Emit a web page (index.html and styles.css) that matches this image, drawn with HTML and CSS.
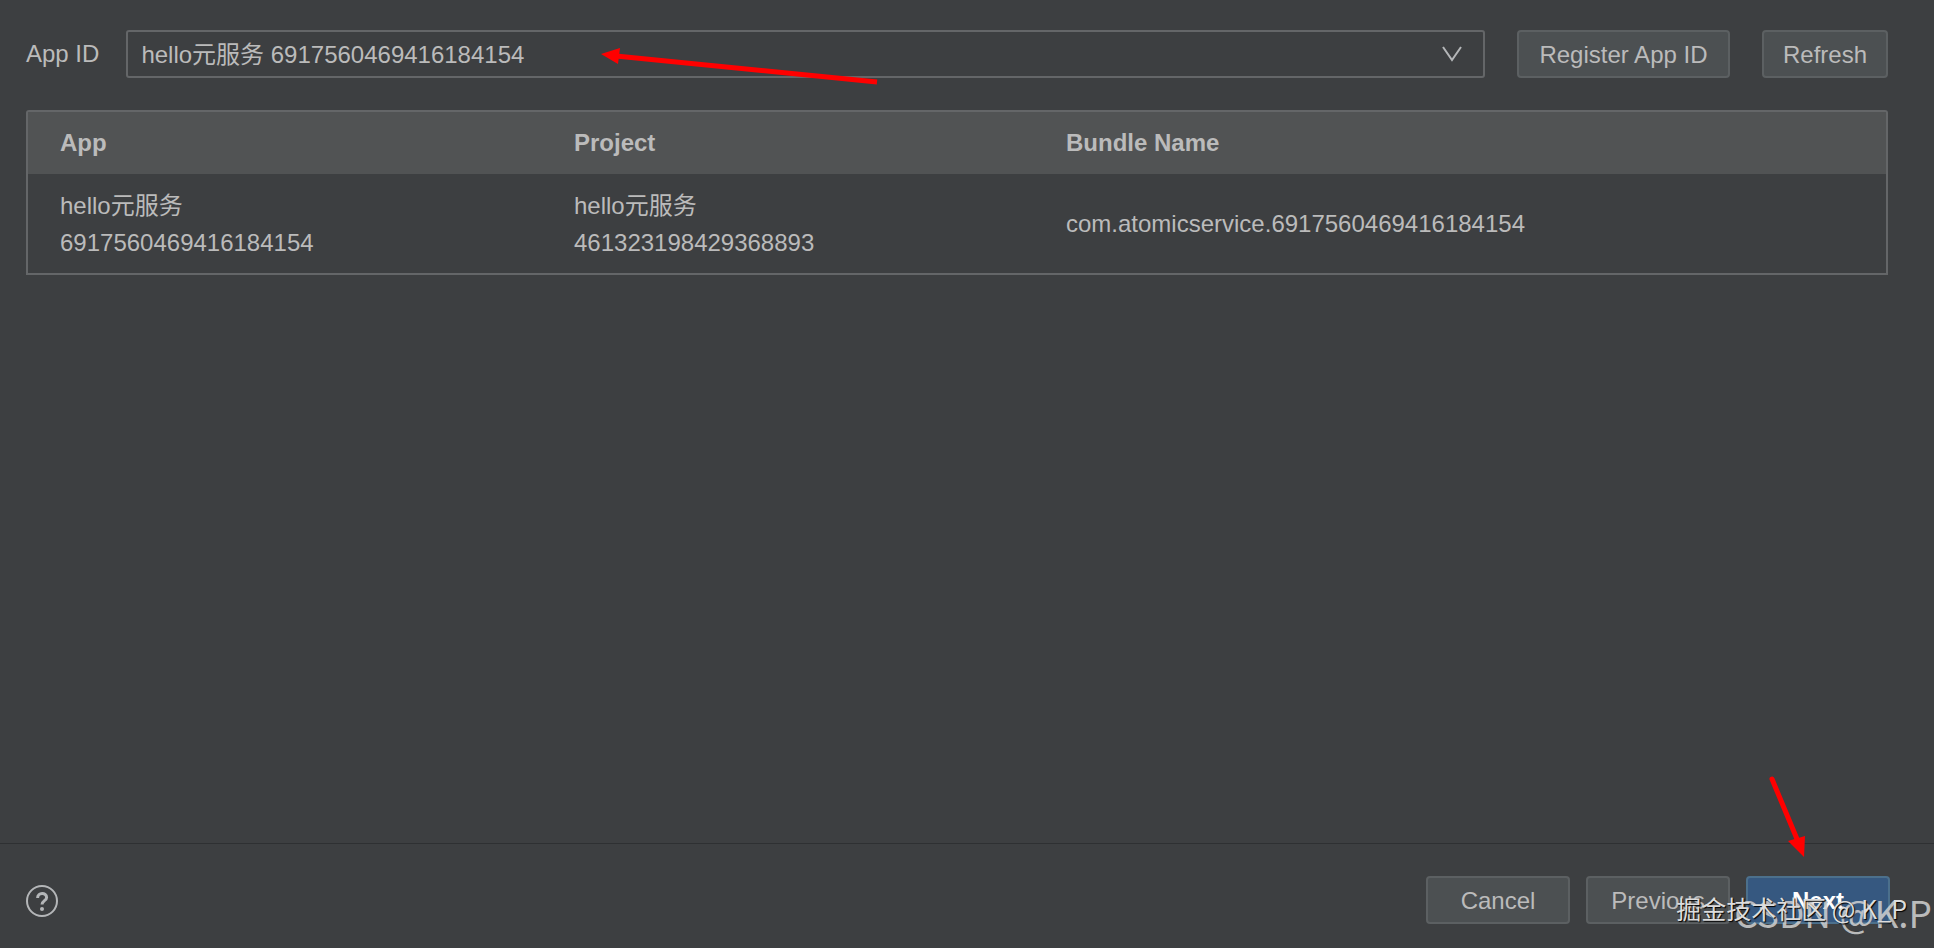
FILE: index.html
```html
<!DOCTYPE html>
<html lang="zh-CN">
<head>
<meta charset="utf-8">
<title>App ID</title>
<link rel="stylesheet" href="styles.css">
</head>
<body>
<main class="content">
  <form class="toolbar">
    <label class="label" for="app-id">App ID</label>
    <div class="combo">
      <select class="combo-field" id="app-id">
        <option>hello元服务 6917560469416184154</option>
      </select>
      <svg class="combo-chevron" width="20" height="16" viewBox="0 0 20 16" aria-hidden="true"><path d="M1 1 L10 14 L19 1"/></svg>
    </div>
    <button class="button register" type="button">Register App ID</button>
    <button class="button" type="button">Refresh</button>
  </form>
  <div class="table-frame">
    <table class="table">
      <thead>
        <tr><th class="col-app">App</th><th class="col-project">Project</th><th>Bundle Name</th></tr>
      </thead>
      <tbody>
        <tr>
          <td>hello元服务<br>6917560469416184154</td>
          <td>hello元服务<br>461323198429368893</td>
          <td>com.atomicservice.6917560469416184154</td>
        </tr>
      </tbody>
    </table>
  </div>
</main>
<footer class="footer">
  <button class="help" type="button" aria-label="Help">
    <svg width="34" height="34" viewBox="0 0 34 34" aria-hidden="true"><circle cx="17" cy="17" r="15"/><path class="hook" d="M12.6 14 C12.6 8.2 21.6 8.2 21.6 13.4 C21.6 16.6 17 16.8 17 20.6"/><circle class="dot" cx="17" cy="25" r="2"/></svg>
  </button>
  <div class="actions">
    <button class="button action" type="button">Cancel</button>
    <button class="button action" type="button">Previous</button>
    <button class="button action primary" type="button">Next</button>
  </div>
</footer>
<svg class="arrow arrow-select" width="280" height="40" viewBox="0 0 280 40" aria-hidden="true"><path class="shaft" d="M15 10 L276 36"/><path d="M0 8 L19 2 L17 18 Z"/></svg>
<svg class="arrow arrow-next" width="40" height="84" viewBox="0 0 40 84" aria-hidden="true"><path class="shaft round" d="M4 4 L29 64"/><path d="M36 82 L20 66 L37 61 Z"/></svg>
<div class="mark mark-csdn">CSDN @K.P</div>
<div class="mark mark-juejin">掘金技术社区 @ K_P</div>
</body>
</html>
```
FILE: styles.css
```css
* { box-sizing: border-box; }
body {
  position: relative;
  display: flex;
  flex-direction: column;
  min-height: 100vh;
  margin: 0;
  background: #3d3f41;
  color: #bbbbbb;
  font: 24px/36px "Liberation Sans", "Noto Sans CJK SC", sans-serif;
}
.content { flex: 1; padding: 30px 46px 0 26px; }
.toolbar { display: flex; align-items: center; gap: 32px; margin: 0 0 32px; }
.label { margin-right: -5px; }
.combo { position: relative; flex: 1; }
.combo-field {
  display: block;
  width: 100%;
  height: 48px;
  padding: 1px 13px 0;
  appearance: none;
  border: 2px solid #646668;
  border-radius: 3px;
  background: #3d3f41;
  color: inherit;
  font: inherit;
}
.combo-chevron {
  position: absolute;
  top: 16px;
  right: 23px;
  fill: none;
  stroke: #b4b6b8;
  stroke-width: 2;
  pointer-events: none;
}
.button {
  height: 48px;
  padding: 1px 19px 0;
  border: 2px solid #5c6062;
  border-radius: 4px;
  background: #4c5052;
  color: inherit;
  font: inherit;
}
.register { min-width: 213px; }
.table-frame { border: 2px solid #646668; border-radius: 3px 3px 0 0; }
.table { width: 100%; border-collapse: collapse; table-layout: fixed; }
.table th, .table td { padding: 13px 0 13px 32px; text-align: left; }
.table th { background: #515354; }
.table td { height: 99px; padding: 12px 0 12px 32px; line-height: 37px; }
.col-app { width: 514px; }
.col-project { width: 492px; }
.footer {
  display: flex;
  align-items: center;
  justify-content: space-between;
  padding: 32px 44px 24px 25px;
  border-top: 1px solid #2e3032;
}
.help { display: flex; padding: 2px 0 0; border: 0; background: none; }
.help svg { fill: none; stroke: #b4b6b8; stroke-width: 2; }
.help .hook { stroke-width: 3; }
.help .dot { fill: #b4b6b8; stroke: none; }
.actions { display: flex; gap: 16px; }
.action { width: 144px; }
.primary { border-color: #4c708c; background: #365880; color: #ffffff; font-weight: bold; }
.arrow { position: absolute; fill: #ff0000; pointer-events: none; }
.shaft { stroke: #ff0000; stroke-width: 5; }
.round { stroke-linecap: round; }
.arrow-select { top: 46px; left: 601px; }
.arrow-next { right: 126px; bottom: 89px; }
.mark { position: absolute; white-space: nowrap; pointer-events: none; }
.mark-csdn {
  right: 2px;
  bottom: 12px;
  color: rgba(210, 210, 210, 0.85);
  font: 37px/48px "Noto Sans CJK SC", sans-serif;
}
.mark-juejin {
  right: 27px;
  bottom: 22px;
  color: #dddddd;
  font: 25px/36px "Noto Sans CJK SC", sans-serif;
  text-shadow: 1px 1px 1px #000000;
}
```
